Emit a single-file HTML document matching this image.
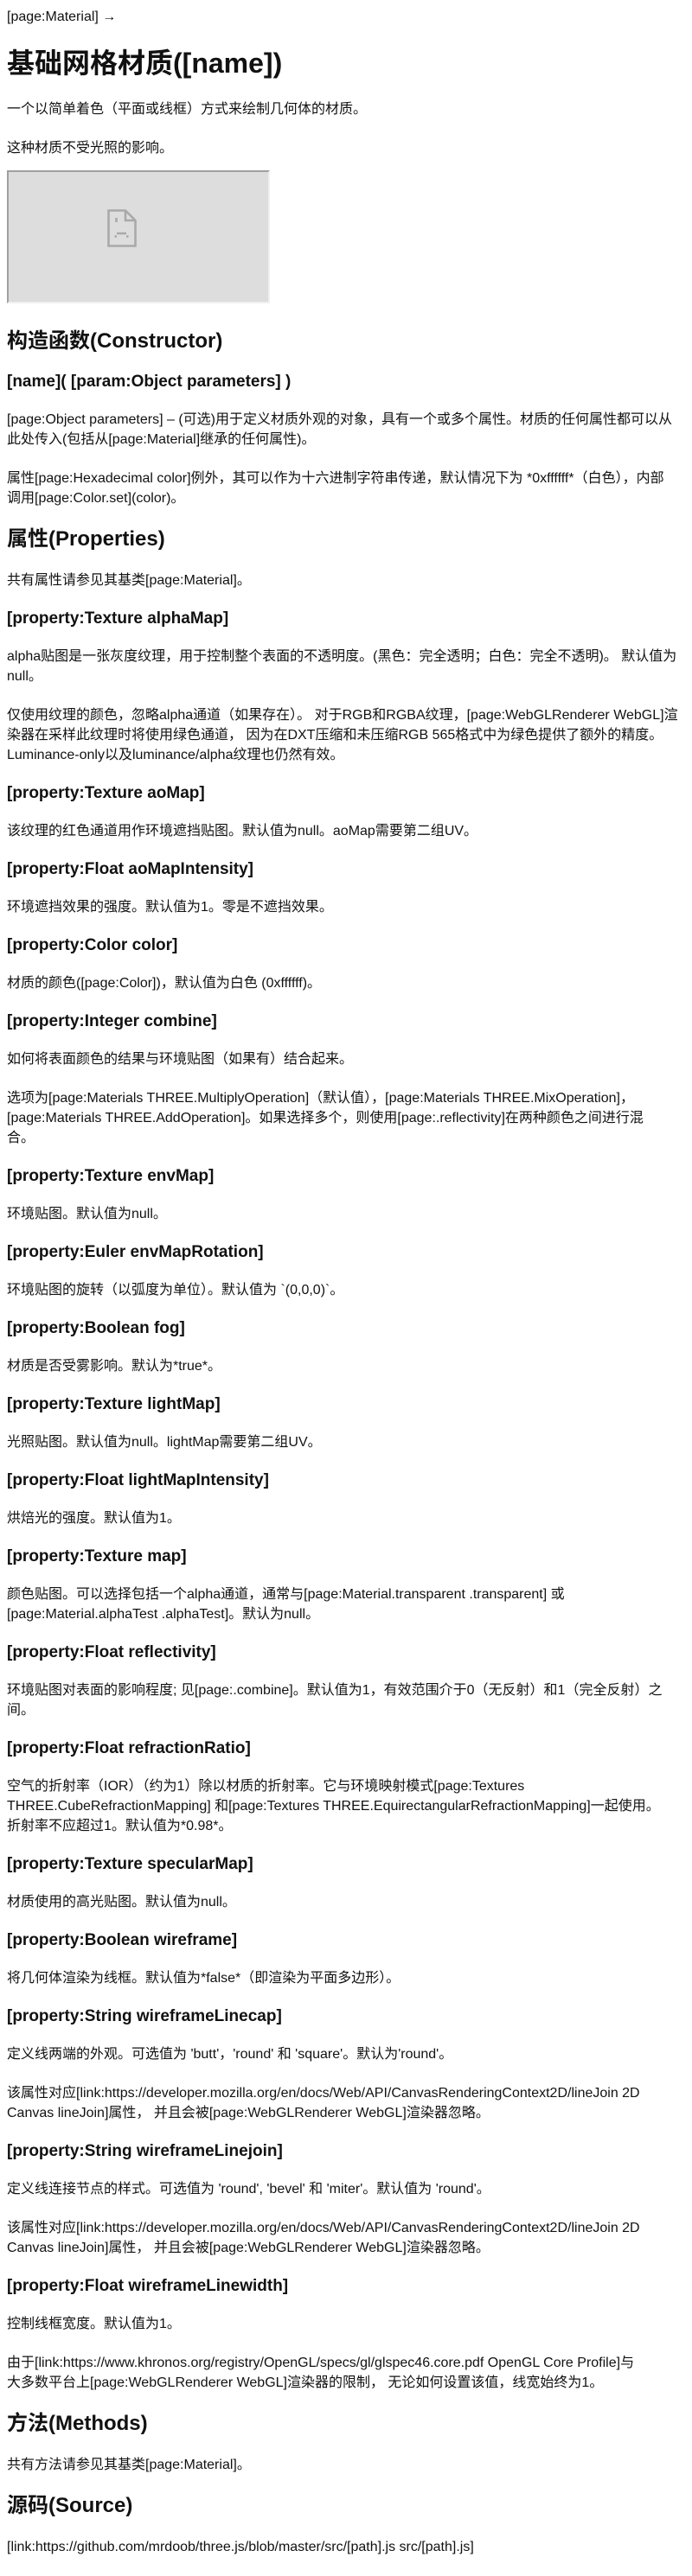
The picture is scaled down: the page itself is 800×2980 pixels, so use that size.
<!DOCTYPE html>
<html><head><meta charset="utf-8">
<style>
html,body{margin:0;padding:0;background:#fff;}
body{margin:8px;font-family:"Liberation Sans","Noto Sans CJK SC",sans-serif;font-size:16px;line-height:23px;color:#111;width:784px;}
p{margin:22px 0;white-space:nowrap;}
.top{height:23px;}
h1{font-size:32px;line-height:40px;margin:22px 0;font-weight:bold;}
h2{font-size:24px;line-height:28px;margin:22px 0;font-weight:bold;}
h3{font-size:19px;line-height:21px;margin:22px 0;font-weight:bold;}
.frame{width:300px;height:150px;border:2px solid;border-color:#a0a0a0 #f0f0f0 #f0f0f0 #a0a0a0;background:#ddd;position:relative;margin:14px 0 30px 0;}
.frame svg{position:absolute;left:114px;top:43px;}
p.nm{margin-bottom:0;}
</style></head><body>
<div class="top">[page:Material] →</div>
<h1>基础网格材质([name])</h1>
<p>一个以简单着色（平面或线框）方式来绘制几何体的材质。</p>
<p class="nm">这种材质不受光照的影响。</p>
<div class="frame"><svg width="34" height="44" viewBox="0 0 34 44"><g fill="none" stroke="#a9a9a9" stroke-width="2.6"><path d="M1.5 1.5H21L32.5 13V42.5H1.5Z"/><path d="M21 1.5V13H32.5"/><path d="M10.5 10V15"/><path d="M11 28H22M8.5 31.5H11M22 31.5H24.5"/></g></svg></div>
<h2>构造函数(Constructor)</h2>
<h3>[name]( [param:Object parameters] )</h3>
<p>[page:Object parameters] – (可选)用于定义材质外观的对象，具有一个或多个属性。材质的任何属性都可以从<br>此处传入(包括从[page:Material]继承的任何属性)。</p>
<p>属性[page:Hexadecimal color]例外，其可以作为十六进制字符串传递，默认情况下为 *0xffffff*（白色），内部<br>调用[page:Color.set](color)。</p>
<h2>属性(Properties)</h2>
<p>共有属性请参见其基类[page:Material]。</p>
<h3>[property:Texture alphaMap]</h3>
<p>alpha贴图是一张灰度纹理，用于控制整个表面的不透明度。(黑色：完全透明；白色：完全不透明)。 默认值为<br>null。</p>
<p>仅使用纹理的颜色，忽略alpha通道（如果存在）。 对于RGB和RGBA纹理，[page:WebGLRenderer WebGL]渲<br>染器在采样此纹理时将使用绿色通道， 因为在DXT压缩和未压缩RGB 565格式中为绿色提供了额外的精度。<br>Luminance-only以及luminance/alpha纹理也仍然有效。</p>
<h3>[property:Texture aoMap]</h3>
<p>该纹理的红色通道用作环境遮挡贴图。默认值为null。aoMap需要第二组UV。</p>
<h3>[property:Float aoMapIntensity]</h3>
<p>环境遮挡效果的强度。默认值为1。零是不遮挡效果。</p>
<h3>[property:Color color]</h3>
<p>材质的颜色([page:Color])，默认值为白色 (0xffffff)。</p>
<h3>[property:Integer combine]</h3>
<p>如何将表面颜色的结果与环境贴图（如果有）结合起来。</p>
<p>选项为[page:Materials THREE.MultiplyOperation]（默认值），[page:Materials THREE.MixOperation]，<br>[page:Materials THREE.AddOperation]。如果选择多个，则使用[page:.reflectivity]在两种颜色之间进行混<br>合。</p>
<h3>[property:Texture envMap]</h3>
<p>环境贴图。默认值为null。</p>
<h3>[property:Euler envMapRotation]</h3>
<p>环境贴图的旋转（以弧度为单位）。默认值为 `(0,0,0)`。</p>
<h3>[property:Boolean fog]</h3>
<p>材质是否受雾影响。默认为*true*。</p>
<h3>[property:Texture lightMap]</h3>
<p>光照贴图。默认值为null。lightMap需要第二组UV。</p>
<h3>[property:Float lightMapIntensity]</h3>
<p>烘焙光的强度。默认值为1。</p>
<h3>[property:Texture map]</h3>
<p>颜色贴图。可以选择包括一个alpha通道，通常与[page:Material.transparent .transparent] 或<br>[page:Material.alphaTest .alphaTest]。默认为null。</p>
<h3>[property:Float reflectivity]</h3>
<p>环境贴图对表面的影响程度; 见[page:.combine]。默认值为1，有效范围介于0（无反射）和1（完全反射）之<br>间。</p>
<h3>[property:Float refractionRatio]</h3>
<p>空气的折射率（IOR）（约为1）除以材质的折射率。它与环境映射模式[page:Textures<br>THREE.CubeRefractionMapping] 和[page:Textures THREE.EquirectangularRefractionMapping]一起使用。<br>折射率不应超过1。默认值为*0.98*。</p>
<h3>[property:Texture specularMap]</h3>
<p>材质使用的高光贴图。默认值为null。</p>
<h3>[property:Boolean wireframe]</h3>
<p>将几何体渲染为线框。默认值为*false*（即渲染为平面多边形）。</p>
<h3>[property:String wireframeLinecap]</h3>
<p>定义线两端的外观。可选值为 'butt'，'round' 和 'square'。默认为'round'。</p>
<p>该属性对应[link:https://developer.mozilla.org/en/docs/Web/API/CanvasRenderingContext2D/lineJoin 2D<br>Canvas lineJoin]属性， 并且会被[page:WebGLRenderer WebGL]渲染器忽略。</p>
<h3>[property:String wireframeLinejoin]</h3>
<p>定义线连接节点的样式。可选值为 'round', 'bevel' 和 'miter'。默认值为 'round'。</p>
<p>该属性对应[link:https://developer.mozilla.org/en/docs/Web/API/CanvasRenderingContext2D/lineJoin 2D<br>Canvas lineJoin]属性， 并且会被[page:WebGLRenderer WebGL]渲染器忽略。</p>
<h3>[property:Float wireframeLinewidth]</h3>
<p>控制线框宽度。默认值为1。</p>
<p>由于[link:https://www.khronos.org/registry/OpenGL/specs/gl/glspec46.core.pdf OpenGL Core Profile]与<br>大多数平台上[page:WebGLRenderer WebGL]渲染器的限制， 无论如何设置该值，线宽始终为1。</p>
<h2>方法(Methods)</h2>
<p>共有方法请参见其基类[page:Material]。</p>
<h2>源码(Source)</h2>
<p>[link:https://github.com/mrdoob/three.js/blob/master/src/[path].js src/[path].js]</p>
</body></html>
